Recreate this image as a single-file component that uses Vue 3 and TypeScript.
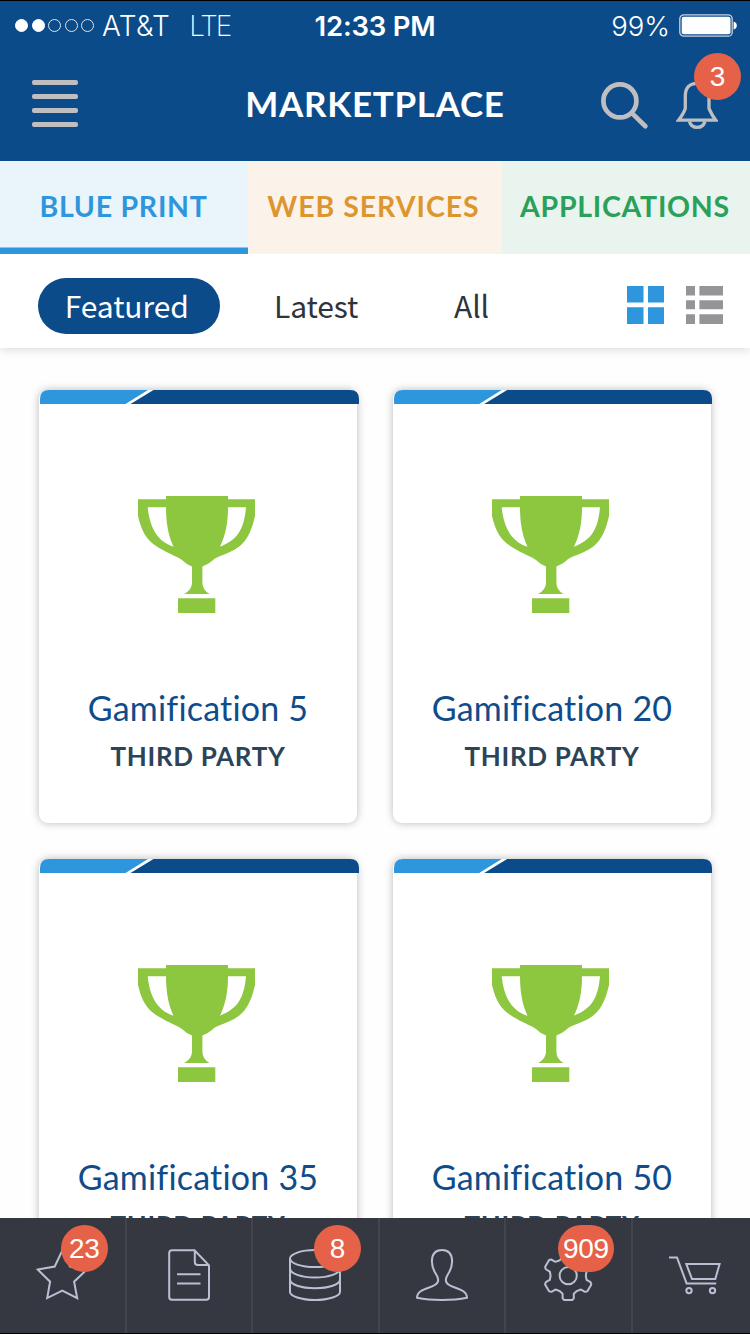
<script setup lang="ts">
interface Tab { label: string; tone: string }
interface NavItem { icon: string; badge?: string }

const signal: boolean[] = [true, true, false, false, false]
const tabs: Tab[] = [
  { label: 'BLUE PRINT', tone: 'blue' },
  { label: 'WEB SERVICES', tone: 'orange' },
  { label: 'APPLICATIONS', tone: 'green' },
]
const cards: string[] = ['Gamification 5', 'Gamification 20', 'Gamification 35', 'Gamification 50']
const nav: NavItem[] = [
  { icon: 'star', badge: '23' },
  { icon: 'file' },
  { icon: 'data', badge: '8' },
  { icon: 'user' },
  { icon: 'gear', badge: '909' },
  { icon: 'cart' },
]

function gearOutline(cx: number, cy: number): string {
  const points: string[] = []
  // One tooth, pointing down, repeated every 60 degrees.
  const tooth: [number, number][] = [[8.6, 15.4], [5.6, 18], [5.6, 22.6], [4, 24.4], [-4, 24.4], [-5.6, 22.6], [-5.6, 18], [-8.6, 15.4]]
  for (let i = 0; i < 6; i++) {
    const a = (i * Math.PI) / 3
    for (const [x, y] of tooth) {
      const px = cx + x * Math.cos(a) - y * Math.sin(a)
      const py = cy + x * Math.sin(a) + y * Math.cos(a)
      points.push(`${px.toFixed(2)} ${py.toFixed(2)}`)
    }
  }
  return `M${points.join('L')}Z`
}
const gearPath = gearOutline(26.2, 26.7)
</script>

<template>
  <div class="screen">
    <header class="top">
      <div class="status">
        <div class="carrier">
          <i v-for="(on, i) in signal" :key="i" class="dot" :class="{ on }"></i>
          <span class="network">AT&amp;T</span>
          <span class="lte">LTE</span>
        </div>
        <div class="clock">12:33 PM</div>
        <div class="power">
          <span class="percent">99%</span>
          <svg width="58" height="23" viewBox="0 0 58 23">
            <rect x=".8" y=".8" width="52.4" height="21.4" rx="4" fill="none" stroke="#c4d3e3" stroke-width="1.3" />
            <rect x="2.7" y="2.7" width="48.8" height="17.6" rx="2" fill="#fff" />
            <path d="M54.6 7.5q3.2 1 3.2 4t-3.2 4z" fill="#fff" />
          </svg>
        </div>
      </div>
      <div class="title-bar">
        <div class="burger"><i></i><i></i><i></i><i></i></div>
        <h1>MARKETPLACE</h1>
        <div class="actions">
          <svg class="search" width="48" height="48" viewBox="0 0 48 48" fill="none" stroke="#bfbfc1" stroke-width="4.7" stroke-linecap="round">
            <circle cx="18.9" cy="18.9" r="16.5" />
            <path d="M31.2 31.4 44.4 44.2" />
          </svg>
          <div class="bell">
            <svg width="42" height="48" viewBox="0 0 42 48" fill="none" stroke="#bfbfc1" stroke-width="3.3">
              <path d="M2.5 38.2H39.8C36.5 34 34.5 30 33 26.5V14C33 5 28 1.3 21.2 1.3S9.3 5 9.3 14V26.5C8 30.5 5.8 34 2.5 38.2Z" />
              <path d="M13.5 39.5Q15 45.4 21.2 45.4T28.9 39.5" />
            </svg>
            <span class="badge">3</span>
          </div>
        </div>
      </div>
    </header>

    <nav class="tabs">
      <div v-for="(t, i) in tabs" :key="t.label" class="tab" :class="[t.tone, { active: i === 0 }]"><span>{{ t.label }}</span></div>
    </nav>

    <section class="filters">
      <span class="filter selected">Featured</span>
      <span class="filter latest">Latest</span>
      <span class="filter all">All</span>
      <div class="views">
        <svg width="37" height="38" viewBox="0 0 37 38" fill="#2e96dc">
          <path d="M0 0h16.5v16.5H0zM21 0h16v16.5H21zM0 21.2h16.5V38H0zM21 21.2h16V38H21z" />
        </svg>
        <svg width="37" height="38" viewBox="0 0 37 38" fill="#959598">
          <path d="M0 0h9v9.6H0zM13.4 0H37v9.6H13.4zM0 14.3h9v9H0zM13.4 14.3H37v9H13.4zM0 28.3h9V38H0zM13.4 28.3H37V38H13.4z" />
        </svg>
      </div>
    </section>

    <main class="grid">
      <article v-for="name in cards" :key="name" class="card">
        <svg class="ribbon" viewBox="0 0 319 14" preserveAspectRatio="none">
          <path d="M0 14V9Q0 0 9 0H108L85.5 14Z" fill="#2e96dc" />
          <path d="M90.5 14 113.5 0H310Q319 0 319 9V14Z" fill="#0b4b8a" />
        </svg>
        <svg class="trophy" width="117" height="117" viewBox="0 0 117 117" fill="#8dc63f" fill-rule="evenodd">
          <path d="M28 0H90V3.3H117V20C112 42 105 50 92 56C84 60 77 61 74 65Q69 69 64.4 70.5V87Q64.5 94 71.5 98H46Q53.8 94 54 87V70.5Q49 69 44 64C39 60 33 59 25 54C12 47 5 41 0 20V3.3H28ZM9.7 11.3C12 34 21 46 35.5 50.7C30 39 28 26 28 11.3ZM90 11.3C90 26 88 38 82 50.7C99 44 106 34 108 11.3Z" />
          <path d="M40 102.3H77.3V117H40Z" />
        </svg>
        <h2>{{ name }}</h2>
        <p>THIRD PARTY</p>
      </article>
    </main>

    <footer class="dock">
      <div v-for="n in nav" :key="n.icon" class="dock-item">
        <svg width="52" height="52" viewBox="0 0 52 52" fill="none" stroke="#b9c0d4" stroke-width="2">
          <path v-if="n.icon === 'star'" d="M1.8 20.6 18.7 17.5 26.3 1.5 34 17.5 50.8 20.6 38.1 32.7 41.2 49.1 26.3 41.7 11.2 49.1 14.1 32.7Z" />
          <template v-else-if="n.icon === 'file'">
            <path d="M31.5 1.2H9Q6.2 1.2 6.2 4V48Q6.2 50.8 9 50.8H43.3Q46 50.8 46 48V16.3ZM31.8 1.8V13Q31.8 16 34.8 16H45.5" />
            <path d="M14 25.2H37.5M14 34.4H37.5" />
          </template>
          <template v-else-if="n.icon === 'data'">
            <ellipse cx="26" cy="9.6" rx="25" ry="8.5" />
            <path d="M1 9.6V43C1 47 12 51 26 51S51 47 51 43V9.6M1 19.5C1 24.5 12 28.5 26 28.5S51 24.5 51 19.5M1 30.5C1 35.5 12 39.2 26 39.2S51 35.5 51 30.5" />
          </template>
          <path v-else-if="n.icon === 'user'" d="M26 1C19 1 15.9 5.5 15.9 12.5C15.9 23 22.2 25.5 22.2 31C22.2 40 1 37.5 1 48.8Q12 51 26 51T51 48.8C51 37.5 29.8 40 29.8 31C29.8 25.5 36.1 23 36.1 12.5C36.1 5.5 33 1 26 1Z" />
          <template v-else-if="n.icon === 'gear'">
            <path :d="gearPath" stroke-linejoin="round" />
            <circle cx="26.2" cy="26.7" r="8.6" />
          </template>
          <template v-else>
            <path d="M0 8.5H8L17.6 34.4H47.2M17.3 15H50.6L46.3 30H23Z" />
            <circle cx="20" cy="41.6" r="2.7" /><circle cx="43.5" cy="41.6" r="2.7" />
          </template>
        </svg>
        <span v-if="n.badge" class="badge" :class="{ wide: n.badge.length > 2 }">{{ n.badge }}</span>
      </div>
    </footer>
  </div>
</template>

<style>
body { background: #fff; }
</style>

<style scoped>
* { box-sizing: border-box; }
h1, h2, p { margin: 0; }
svg { display: block; flex: none; }
.screen {
  width: 750px; height: 1334px; overflow: hidden; display: flex; flex-direction: column;
  background: #fefefe; font-family: Lato, "Liberation Sans", sans-serif; white-space: nowrap;
}
.top { height: 161px; flex: none; background: #0b4b8a; border-top: 1px solid #000; color: #fff; }
.status {
  height: 49px; display: grid; grid-template-columns: 1fr auto 1fr; align-items: center;
  padding: 0 13px 0 15px; font: 28px/48px "Liberation Sans", sans-serif;
}
.carrier { display: flex; align-items: center; }
.dot { width: 13px; height: 13px; margin-right: 3.5px; border: 1px solid #dbe4ed; border-radius: 50%; }
.dot.on { background: #fff; border-color: #fff; }
.network { margin-left: 4.5px; letter-spacing: .3px; font-family: Inter, sans-serif; font-weight: 350; }
.lte { margin-left: 19px; font-family: Inter, sans-serif; font-weight: 250; letter-spacing: -2px; }
.clock { font-family: Inter, sans-serif; font-weight: 600; font-size: 27.5px; letter-spacing: -.2px; padding-right: 2px; }
.power { display: flex; align-items: center; justify-content: flex-end; gap: 9px; }
.percent { font-family: Inter, sans-serif; font-weight: 350; font-size: 27.5px; }
.title-bar { height: 111px; display: grid; grid-template-columns: 1fr auto 1fr; padding: 0 32px; }
.burger { display: flex; flex-direction: column; gap: 9px; padding-top: 30px; }
.burger i { width: 46px; height: 5px; border-radius: 2px; background: #bfbfc1; }
h1 { font-size: 35px; line-height: 42px; font-weight: 700; margin-top: 32px; letter-spacing: .7px; }
.actions { display: flex; justify-content: flex-end; gap: 27px; padding-top: 32px; }
.bell { position: relative; }
.badge {
  position: absolute; width: 46.7px; height: 46.7px; border-radius: 24px; background: #e56248; color: #fff;
  font: 28px/48px "Liberation Sans", sans-serif; text-align: center; letter-spacing: -.3px;
}
.bell .badge { left: 18px; top: -29px; }
.tabs { flex: none; height: 93px; display: grid; grid-template-columns: 248px 254px 248px; grid-template-rows: 93px; }
.tab { height: 93px; text-align: center; font-size: 28.5px; line-height: 91px; font-weight: 700; letter-spacing: .72px; padding-right: 1px; }
.tab.blue { background: #e9f4fb; color: #2e96dc; }
.tab.orange { background: #fbf3ea; color: #dd962f; letter-spacing: .95px; padding-right: 3px; }
.tab.green { background: #e9f4ee; color: #2aa05a; padding-right: 2px; }
.tab.active { box-shadow: inset 0 -6.5px #2e96dc; }
.filters {
  flex: none; height: 94px; padding: 24px 27px 0 37.5px; display: flex; align-items: flex-start; background: #fff;
  box-shadow: 0 1px 10px rgba(0, 0, 0, .17); clip-path: inset(0 0 -14px 0); position: relative;
  font-family: "Noto Sans CJK SC", sans-serif; font-size: 30px; color: #2f343c;
}
.filter { line-height: 54px; height: 56px; letter-spacing: -.1px; }
.selected { width: 182.5px; border-radius: 28px; background: #0b4b8a; color: #fff; text-align: center; padding-right: 4px; }
.latest { margin-left: 54px; width: 84px; }
.all { margin-left: 96px; }
.views { display: flex; gap: 22px; margin: 8px 0 0 auto; }
.grid {
  flex: 1; min-height: 0; overflow: hidden; padding: 42px 0 0 39px;
  display: grid; grid-template-columns: 318px 318px; grid-auto-rows: 433px; gap: 36px;
}
.card {
  position: relative; display: flex; flex-direction: column; align-items: center; background: #fff;
  border-radius: 9px; box-shadow: 0 0 9px rgba(0, 0, 0, .28);
}
.ribbon { align-self: flex-start; margin-left: 1px; width: 319px; height: 14px; }
.card:nth-child(even) .ribbon { width: 318px; }
.trophy { margin: 92px 3px 0 0; }
h2 { margin-top: 73px; font-size: 34px; line-height: 44px; font-weight: 400; color: #0f4c8a; letter-spacing: .2px; }
p { margin-top: 9px; font-size: 26px; line-height: 34px; font-weight: 700; color: #2c4458; letter-spacing: .65px; }
.dock {
  flex: none; height: 116px; display: grid; grid-template-columns: repeat(6, 126.5px);
  background: #353841; border-bottom: 1px solid #000; position: relative; overflow: hidden;
}
.dock-item { position: relative; border-right: 2px solid #42454e; display: flex; justify-content: center; padding-top: 31px; }
.dock-item .badge { left: 61px; top: 7px; }
.dock-item .badge.wide { width: 56px; left: 52px; }
</style>
